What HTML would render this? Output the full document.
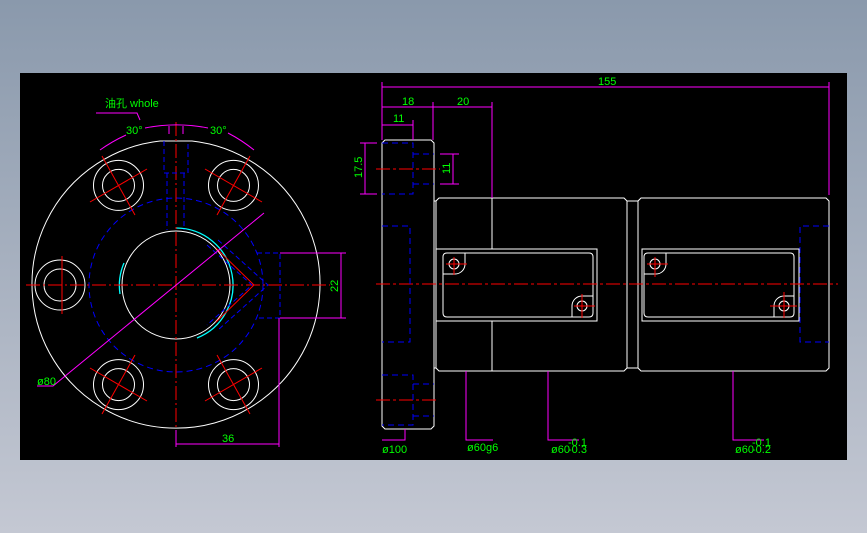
<!DOCTYPE html>
<html><head><style>
html,body{margin:0;padding:0}
body{width:867px;height:533px;background:linear-gradient(#8a99ac,#c4c8d3);position:relative;overflow:hidden}
svg{position:absolute;left:0;top:0}
text{font-family:"Liberation Sans","Noto Sans CJK SC",sans-serif;fill:#00ff00;font-size:11px}
</style></head><body>
<svg width="867" height="533" viewBox="0 0 867 533">
<rect x="20" y="73" width="827" height="387" fill="#000"/>
<g fill="none" stroke-width="1">
<!-- LEFT VIEW -->
<path d="M160 141 A144 144 0 1 0 192 141 Z" stroke="#fff"/>
<path d="M160 141 H192" stroke="#fff"/>
<circle cx="176" cy="285" r="54" stroke="#fff"/>
<path d="M176 228 A57 57 0 0 1 197 338" stroke="#0ff" stroke-width="1.3"/>
<path d="M120 294 A57 57 0 0 1 124 263" stroke="#0ff" stroke-width="1.3"/>
<circle cx="176" cy="285" r="87" stroke="#00f" stroke-dasharray="6 4"/>
<g stroke="#fff">
<circle cx="118.5" cy="185.4" r="25"/><circle cx="118.5" cy="185.4" r="16"/>
<circle cx="233.5" cy="185.4" r="25"/><circle cx="233.5" cy="185.4" r="16"/>
<circle cx="118.5" cy="384.6" r="25"/><circle cx="118.5" cy="384.6" r="16"/>
<circle cx="233.5" cy="384.6" r="25"/><circle cx="233.5" cy="384.6" r="16"/>
<circle cx="60" cy="285" r="25"/><circle cx="60" cy="285" r="16"/>
</g>
<path d="M257 253 H280 V318 H257" stroke="#00f" stroke-dasharray="5 3"/>
<g stroke="#f00">
<path d="M102 156 L135 215 M90 202 L147 169"/>
<path d="M250 156 L217 215 M262 202 L205 169"/>
<path d="M102 414 L135 355 M90 368 L147 401"/>
<path d="M250 414 L217 355 M262 368 L205 401"/>
<path d="M62 256 V314"/>
<path d="M26 285 H330" stroke-dasharray="14 3 2 3"/>
<path d="M176 122 V440" stroke-dasharray="14 3 2 3"/>
<path d="M216 248 L254 285 L216 322"/>
</g>
<g stroke="#00f" stroke-dasharray="5 3">
<path d="M164 141 V173 H188 V141 M167 173 V230 M184 173 V230"/>
<path d="M207 245 L252 285 L207 325 M218 240 L268 285 L218 330"/>
</g>
<g stroke="#f0f">
<path d="M280 253 H346 M280 318 H346 M341 253 V318"/>
<path d="M279 318 V447 M176 444 H279 M176 430 V447"/>
<path d="M264 213 L53 386 H37"/>
<path d="M96 113 H137 L140 120"/>
<path d="M100 150 A160 160 0 0 1 126 135 M145 128 A160 160 0 0 1 208 128 M228 133 A160 160 0 0 1 254 150"/>
<path d="M169 126 V134 M183 126 V134"/>
</g>
<text x="126" y="134">30°</text><text x="210" y="134">30°</text>
<text x="105" y="107" font-size="8">油孔 whole</text>
<text x="222" y="442" font-size="10">36</text>
<text x="37" y="385" font-size="10">ø80</text>
<text font-size="10" transform="translate(338 292) rotate(-90)">22</text>
<!-- RIGHT VIEW -->
<g stroke="#fff">
<path d="M385 140 H431 L434 143 V426 L431 429 H385 L382 426 V143 Z"/>
<path d="M439 198 H624 L627 201 V368 L624 371 H439 L436 368 V201 Z"/>
<path d="M434 201 H436 M434 368 H436"/>
<path d="M627 201 H638 M627 368 H638"/>
<path d="M641 198 H826 L829 201 V368 L826 371 H641 L638 368 V201 Z"/>
<path d="M492 198 V249 M492 321 V371"/>
<rect x="436" y="249" width="161" height="72"/>
<path d="M447 253 H589 Q593 253 593 257 V313 Q593 317 589 317 H447 Q443 317 443 313 V257 Q443 253 447 253 Z"/>
<circle cx="454" cy="264" r="5"/><path d="M443 274 H455 A10 10 0 0 0 465 264 V253"/>
<circle cx="582" cy="306" r="5"/><path d="M593 296 H582 A10 10 0 0 0 572 306 V317"/>
<rect x="642" y="249" width="157" height="72"/>
<path d="M648 253 H790 Q794 253 794 257 V313 Q794 317 790 317 H648 Q644 317 644 313 V257 Q644 253 648 253 Z"/>
<circle cx="655" cy="264" r="5"/><path d="M644 274 H656 A10 10 0 0 0 666 264 V253"/>
<circle cx="784" cy="306" r="5"/><path d="M794 296 H784 A10 10 0 0 0 774 306 V317"/>
</g>
<g stroke="#f00">
<path d="M376 284 H838" stroke-dasharray="14 3 3 3"/>
<path d="M376 169 H440 M376 400 H439" stroke-dasharray="14 3 3 3"/>
<path d="M446 264 H467 M454 257 V275 M574 306 H595 M582 294 V318 M647 264 H668 M655 257 V277 M770 306 H797 M784 292 V318"/>
</g>
<g stroke="#00f" stroke-dasharray="6 4">
<path d="M382 143 H413 V194 H382 M413 154 H434 M413 184 H434"/>
<path d="M382 226 H410 V342 H382"/>
<path d="M382 375 H413 V425 H382 M413 384 H434 M413 416 H434"/>
<path d="M829 226 H800 V342 H829"/>
</g>
<g stroke="#f0f">
<path d="M382 82 V140 M829 82 V195 M382 87 H829"/>
<path d="M382 107 H492 M433 102 V140 M492 102 V198"/>
<path d="M382 125 H413 M413 120 V140"/>
<path d="M360 143 H377 M360 194 H377 M365 143 V194"/>
<path d="M440 154 H459 M440 184 H459 M453 154 V184"/>
<path d="M405 429 V440 H382"/>
<path d="M466 371 V440 H493"/>
<path d="M548 371 V440 H579"/>
<path d="M733 371 V440 H764"/>
</g>
<text x="598" y="85" font-size="10">155</text>
<text x="402" y="105" font-size="10">18</text>
<text x="457" y="105" font-size="10">20</text>
<text x="393" y="122" font-size="9">11</text>
<text font-size="10" transform="translate(362 178) rotate(-90)">17.5</text>
<text font-size="9" transform="translate(450 174) rotate(-90)">11</text>
<text x="382" y="453" font-size="10">ø100</text>
<text x="467" y="451" font-size="10">ø60g6</text>
<text x="551" y="453" font-size="10">ø60</text><text x="568" y="446" font-size="5">-0.1</text><text x="568" y="453" font-size="5">-0.3</text>
<text x="735" y="453" font-size="10">ø60</text><text x="752" y="446" font-size="5">-0.1</text><text x="752" y="453" font-size="5">-0.2</text>
</g>
</svg>
</body></html>
